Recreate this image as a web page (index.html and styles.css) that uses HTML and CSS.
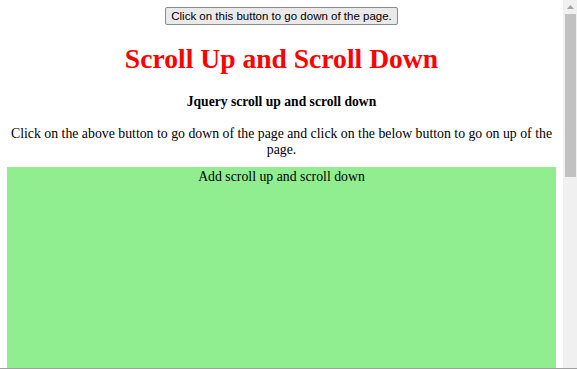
FILE: index.html
```html
<!DOCTYPE html>
<html lang="en">
  <head>
    <meta charset="UTF-8" />
    <meta name="viewport" content="width=device-width, initial-scale=1.0" />
    <title>Scroll Up and Scroll Down</title>
    <link rel="stylesheet" href="styles.css">
  </head>
  <body>
    <div class="window">
      <div class="page">
        <button class="btn" id="down">Click on this button to go down of the page.</button>
        <h1 class="title">Scroll Up and Scroll Down</h1>
        <h4 class="subtitle">Jquery scroll up and scroll down</h4>
        <p class="intro">Click on the above button to go down of the page and click on the below button to go on up of the page.</p>
        <div class="box">Add scroll up and scroll down</div>
      </div>
      <div class="scrollbar">
        <div class="arrow">
          <svg width="7" height="4" viewBox="0 0 7 4"><path d="M0 4 L3.5 0 L7 4 Z" fill="#a3a3a3"/></svg>
        </div>
        <div class="thumb"></div>
      </div>
    </div>
  </body>
</html>
```
FILE: styles.css
```css
body {
  margin: 0;
  font-family: "Liberation Serif", "Times New Roman", serif;
  background-color: #fff;
}
.window {
  display: flex;
  height: 368px;
  border-bottom: 1px solid #a0a0a0;
  overflow: hidden;
}
.page {
  flex: 1;
  padding: 6px 7px 0 7px;
  text-align: center;
  overflow: hidden;
}
.btn {
  font-family: "Liberation Sans", Arial, sans-serif;
  font-size: 11.5px;
  height: 18px;
  padding: 0 5px;
  background-color: #e9e9e9;
  border: 1px solid #8a8a8a;
  border-radius: 2px;
  color: #000;
}
.title {
  color: red;
  font-size: 27.6px;
  margin: 18px 0;
  line-height: 31px;
}
.subtitle {
  font-size: 13.6px;
  margin: 20px 0 16px 0;
  line-height: 16px;
}
.intro {
  font-size: 13.8px;
  margin: 0 0 10px 0;
  line-height: 15.5px;
}
.box {
  background-color: lightgreen;
  height: 400px;
  font-size: 13.8px;
  line-height: 15.5px;
  padding-top: 2px;
}
.scrollbar {
  width: 14px;
  background-color: #f0f0f0;
  display: flex;
  flex-direction: column;
  align-items: center;
}
.arrow {
  height: 14px;
  display: flex;
  align-items: center;
  justify-content: center;
}
.thumb {
  width: 11px;
  height: 163px;
  background-color: #c1c1c1;
}
```
